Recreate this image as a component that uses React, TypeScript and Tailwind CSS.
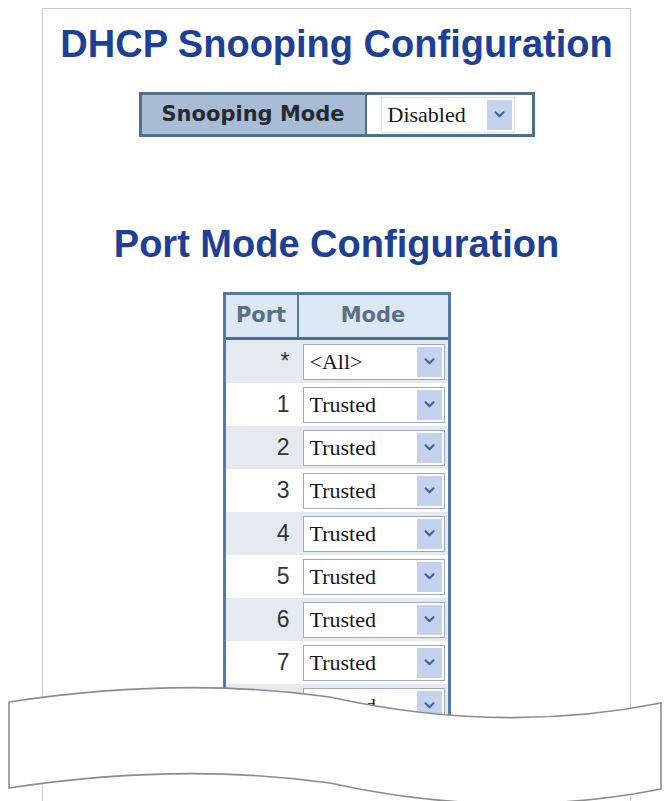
const ports = ["*", "1", "2", "3", "4", "5", "6", "7", "8", "9"];
const modes: Record<string, string> = { "*": "<All>" };

function Chevron() {
    return (
        <svg
            viewBox="0 0 12 8"
            className="w-[11px] h-[7px]"
            fill="none"
            stroke="#3f5fa6"
            strokeWidth={2.4}
            strokeLinecap="round"
            strokeLinejoin="round"
        >
            <path d="M1.5 1.5 6 6l4.5-4.5" />
        </svg>
    );
}

function Select({ value, className }: { value: string; className: string }) {
    return (
        <div className={`h-[36px] flex items-center bg-white ${className}`}>
            <span className="flex-1 pl-[6px] text-left font-['Liberation_Serif',serif] text-[22px] leading-none text-[#161616]">
                {value}
            </span>
            <span className="w-[25px] h-[30px] mr-[2px] bg-[#c5d2ee] flex items-center justify-center">
                <Chevron />
            </span>
        </div>
    );
}

export default function App() {
    return (
        <div className="relative h-[801px] overflow-hidden bg-white">
            {/* Page frame */}
            <div className="ml-[42px] mt-[8px] w-[589px] h-[900px] border border-[#cbcbcb] flex flex-col items-center">
                <h1 className="mt-[16px] font-['Liberation_Sans',Arial,sans-serif] text-[38px] leading-[38px] font-bold text-[#1d3f95] whitespace-nowrap">
                    DHCP Snooping Configuration
                </h1>

                {/* Snooping mode */}
                <div className="mt-[29px] w-[396px] h-[45px] border-[3px] border-[#4f6f91] flex">
                    <div className="w-[225px] bg-[#a9bcd5] border-r-2 border-[#4f6f91] flex items-center justify-center font-['DejaVu_Sans',Verdana,sans-serif] text-[21px] font-bold text-[#262a30]">
                        Snooping Mode
                    </div>
                    <div className="flex-1 flex items-center pl-[14px]">
                        <Select value="Disabled" className="w-[134px] border border-[#dde3ec]" />
                    </div>
                </div>

                <h1 className="mt-[88px] font-['Liberation_Sans',Arial,sans-serif] text-[38px] leading-[38px] font-bold text-[#1d3f95] whitespace-nowrap">
                    Port Mode Configuration
                </h1>

                {/* Port mode table */}
                <div className="mt-[29px] w-[228px] border-[3px] border-[#5479a4]">
                    <div className="h-[45px] flex bg-[#dde8f5] border-b-[3px] border-[#4c6e94] font-['DejaVu_Sans',Verdana,sans-serif] text-[21px] font-bold text-[#5b6f89]">
                        <div className="w-[73px] border-r-2 border-[#5479a4] flex items-center justify-center">Port</div>
                        <div className="flex-1 flex items-center justify-center">Mode</div>
                    </div>
                    {ports.map((p, i) => (
                        <div
                            key={p}
                            className={`h-[43px] flex items-center ${i % 2 === 0 ? "bg-[#e5eaf0]" : "bg-white"}`}
                        >
                            <div className="w-[73px] pr-[9px] text-right font-['Liberation_Sans',Arial,sans-serif] text-[23px] text-[#333]">
                                {p}
                            </div>
                            <Select
                                value={modes[p] ?? "Trusted"}
                                className="ml-[4px] w-[142px] border border-[#9eaac0]"
                            />
                        </div>
                    ))}
                </div>
            </div>

            {/* Torn-page wave over the bottom */}
            <svg
                className="absolute inset-0 pointer-events-none"
                width={671}
                height={801}
                viewBox="0 0 671 801"
            >
                <path
                    d="M9 702 Q180 676 330 697 Q500 735 661 703 L661 789 Q500 821 330 783 Q180 762 9 788 Z"
                    fill="white"
                    stroke="#8c8c8c"
                    strokeWidth={1.6}
                />
            </svg>
        </div>
    );
}
